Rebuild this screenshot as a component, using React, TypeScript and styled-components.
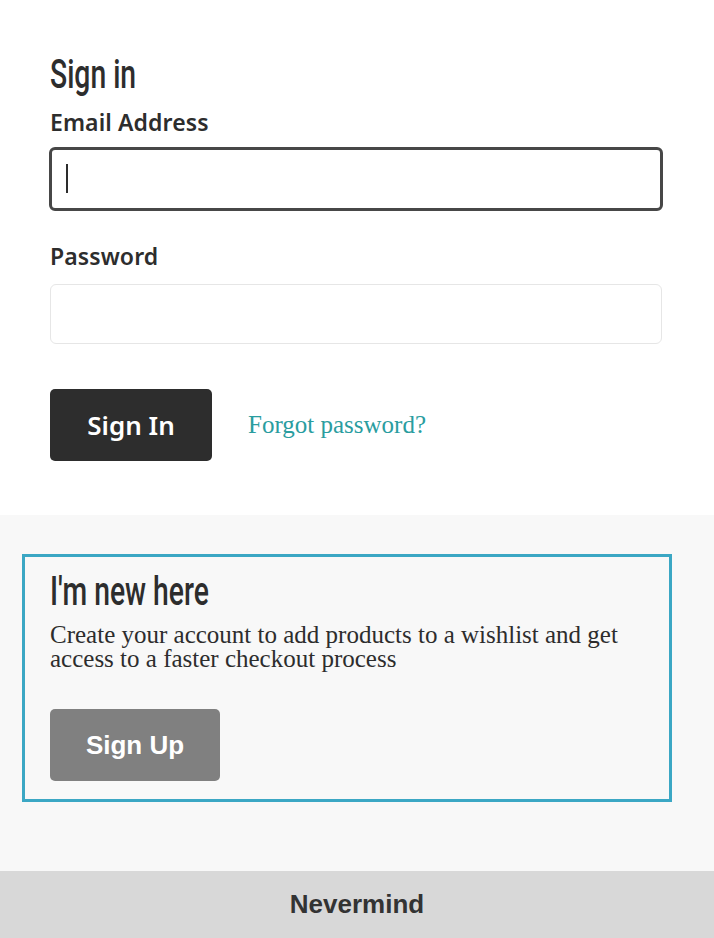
import React from "react";
import styled, { createGlobalStyle } from "styled-components";

const GlobalStyle = createGlobalStyle`
  html, body { margin: 0; padding: 0; background: #ffffff; }
  body { font-family: "Noto Sans", sans-serif; color: #2d2d2d; }
  * { box-sizing: border-box; }
`;

const Page = styled.div`
  display: flex;
  flex-direction: column;
  height: 938px;
  overflow: hidden;
`;

const SignInSection = styled.section`
  height: 515px;
  padding: 50px 52px 0 50px;
  display: flex;
  flex-direction: column;
  align-items: flex-start;
  background: #ffffff;
`;

const Heading = styled.h2`
  display: inline-block;
  margin: 0;
  font-family: Roboto, sans-serif;
  font-weight: 500;
  font-size: 41px;
  line-height: 48px;
  color: #2d2d2d;
  transform: scaleX(0.69);
  transform-origin: left center;
  white-space: nowrap;
`;

const Label = styled.label<{ $top: number }>`
  display: block;
  margin-top: ${(p) => p.$top}px;
  font-family: "Noto Sans", sans-serif;
  font-weight: 600;
  font-size: 23px;
  line-height: 28px;
  letter-spacing: 0.1px;
  color: #2d2d2d;
`;

const Field = styled.div<{ $focused?: boolean }>`
  position: relative;
  align-self: stretch;
  margin: ${(p) => (p.$focused ? "11px -1px 0" : "14px 0 0")};
`;

const TextInput = styled.input<{ $focused?: boolean }>`
  display: block;
  width: 100%;
  height: ${(p) => (p.$focused ? "64px" : "60px")};
  padding: 0 14px;
  border: ${(p) => (p.$focused ? "3px solid #474747" : "1px solid #e6e6e6")};
  border-radius: 6px;
  background: #ffffff;
  font-family: "Noto Sans", sans-serif;
  font-size: 22px;
  color: #2d2d2d;
  caret-color: transparent;
  outline: none;
`;

const Caret = styled.span`
  position: absolute;
  left: 17px;
  top: 17px;
  width: 2px;
  height: 29px;
  background: #2d2d2d;
  pointer-events: none;
`;

const Actions = styled.div`
  display: flex;
  align-items: center;
  gap: 36px;
  margin-top: 45px;
`;

const PrimaryButton = styled.button`
  width: 162px;
  height: 72px;
  border: none;
  border-radius: 5px;
  background: #2d2d2d;
  color: #ffffff;
  font-family: "Noto Sans", sans-serif;
  font-weight: 600;
  font-size: 26px;
  cursor: pointer;
`;

const TextLink = styled.a`
  font-family: "Liberation Serif", serif;
  font-size: 25px;
  color: #2a9d9f;
  text-decoration: none;
`;

const NewSection = styled.section`
  flex: 1;
  background: #f8f8f8;
  padding: 39px 42px 0 22px;
`;

const NewBox = styled.div`
  height: 248px;
  border: 3px solid #3ba7c4;
  padding: 10px 25px 0;
  display: flex;
  flex-direction: column;
  align-items: flex-start;
`;

const Body = styled.p`
  margin: 8px 0 0;
  font-family: "Liberation Serif", serif;
  font-size: 25px;
  line-height: 24px;
  color: #2d2d2d;
`;

const SecondaryButton = styled.button`
  margin-top: 38px;
  width: 170px;
  height: 72px;
  border: none;
  border-radius: 5px;
  background: #808080;
  color: #ffffff;
  font-family: "Liberation Sans", Arial, sans-serif;
  font-weight: 700;
  font-size: 26px;
  cursor: pointer;
`;

const Footer = styled.button`
  height: 67px;
  width: 100%;
  border: none;
  background: #d8d8d8;
  color: #333333;
  font-family: "Liberation Sans", Arial, sans-serif;
  font-weight: 700;
  font-size: 26px;
  cursor: pointer;
`;

export default function App() {
  return (
    <>
      <GlobalStyle />
      <Page>
        <SignInSection>
          <Heading>Sign in</Heading>
          <Label $top={10} htmlFor="email">Email Address</Label>
          <Field $focused>
            <TextInput id="email" type="email" $focused />
            <Caret />
          </Field>
          <Label $top={31} htmlFor="password">Password</Label>
          <Field>
            <TextInput id="password" type="password" />
          </Field>
          <Actions>
            <PrimaryButton>Sign In</PrimaryButton>
            <TextLink href="#">Forgot password?</TextLink>
          </Actions>
        </SignInSection>
        <NewSection>
          <NewBox>
            <Heading>I'm new here</Heading>
            <Body>
              Create your account to add products to a wishlist and get access to a faster checkout process
            </Body>
            <SecondaryButton>Sign Up</SecondaryButton>
          </NewBox>
        </NewSection>
        <Footer>Nevermind</Footer>
      </Page>
    </>
  );
}
